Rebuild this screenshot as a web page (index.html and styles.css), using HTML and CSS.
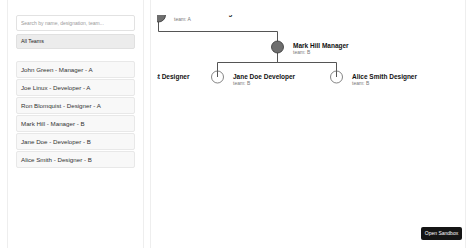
FILE: index.html
```html
<!DOCTYPE html>
<html>

<head>
    <meta charset="utf-8" />
    <title>org chart</title>
    <link rel="stylesheet" href="styles.css">
</head>

<body>
    <div class="app">
        <div class="side-panel">
            <input class="search" type="text" placeholder="Search by name, designation, team...">
            <div class="team-select">All Teams</div>
            <ul class="people-list">
                <li>John Green - Manager - A</li>
                <li>Joe Linux - Developer - A</li>
                <li>Ron Blomquist - Designer - A</li>
                <li>Mark Hill - Manager - B</li>
                <li>Jane Doe - Developer - B</li>
                <li>Alice Smith - Designer - B</li>
            </ul>
        </div>
        <div class="chart-panel">
            <div class="chart">
                <svg width="302" height="200">
                    <!-- links -->
                    <path class="link" d="M1.5,0 V16.5 H120.5 V32" />
                    <path class="link" d="M120.5,32 V47.5 H60.5 V62" />
                    <path class="link" d="M120.5,32 V47.5 H179.5 V62" />
                    <!-- nodes -->
                    <circle class="node parent" cx="1.5" cy="0" r="7" />
                    <text class="name" x="17" y="0">John Green Manager</text>
                    <text class="team" x="17" y="6">team: A</text>

                    <circle class="node parent" cx="120.5" cy="32" r="6" />
                    <text class="name" x="136" y="32.5">Mark Hill Manager</text>
                    <text class="team" x="136" y="38.5">team: B</text>

                    <text class="name" x="32.5" y="63.5" text-anchor="end">Ron Blomquist Designer</text>

                    <circle class="node" cx="60.5" cy="62" r="6" />
                    <text class="name" x="76" y="63.5">Jane Doe Developer</text>
                    <text class="team" x="76" y="69.5">team: B</text>

                    <circle class="node" cx="179.5" cy="62" r="6" />
                    <text class="name" x="195" y="63.5">Alice Smith Designer</text>
                    <text class="team" x="195" y="69.5">team: B</text>
                </svg>
            </div>
        </div>
    </div>
    <a class="sandbox-btn" href="#">Open Sandbox</a>
</body>

</html>
```

FILE: styles.css
```css
body {
    margin: 0;
    font-family: "Liberation Sans", Arial, sans-serif;
    color: #333;
    background: #fff;
}

.app {
    display: flex;
    gap: 6px;
    height: 100vh;
    padding: 0 7px;
}

.side-panel {
    width: 137px;
    box-sizing: border-box;
    padding: 15px 8px;
    border-left: 1px solid #eee;
    border-right: 1px solid #eee;
}

.search {
    display: block;
    width: 100%;
    height: 16px;
    box-sizing: border-box;
    margin: 0;
    padding: 0 4px;
    border: 1px solid #e2e2e2;
    border-radius: 2px;
    font-family: inherit;
    font-size: 5px;
    color: #333;
    outline: none;
}

.search::placeholder {
    color: #9a9a9a;
}

.team-select {
    height: 15px;
    box-sizing: border-box;
    margin-top: 3px;
    padding-left: 4px;
    border: 1px solid #e0e0e0;
    border-radius: 2px;
    background-color: #ececec;
    font-size: 5.3px;
    line-height: 13px;
    color: #222;
}

.people-list {
    margin: 12px 0 0;
    padding: 0;
    list-style: none;
}

.people-list li {
    height: 17px;
    box-sizing: border-box;
    margin-bottom: 1px;
    padding-left: 4px;
    border: 1px solid #e8e8e8;
    border-radius: 2px;
    background-color: #f8f8f8;
    font-size: 6.2px;
    line-height: 15px;
    color: #333;
}

.chart-panel {
    width: 316px;
    box-sizing: border-box;
    padding: 15px 6px 0;
    border-left: 1px solid #eee;
    border-right: 1px solid #eee;
}

.chart {
    overflow: hidden;
}

.chart svg {
    display: block;
}

.link {
    fill: none;
    stroke: #555;
    stroke-width: 1;
}

.node {
    fill: none;
    stroke: #666;
    stroke-width: 0.8;
}

.node.parent {
    fill: #6e6e6e;
    stroke: #333;
}

.name {
    font-size: 6.5px;
    font-weight: bold;
    fill: #111;
}

.team {
    font-size: 5px;
    fill: #777;
}

.sandbox-btn {
    position: fixed;
    right: 12px;
    bottom: 8px;
    width: 41px;
    height: 13px;
    border-radius: 2px;
    background-color: #151515;
    color: #fff;
    font-size: 5px;
    line-height: 13px;
    text-align: center;
    text-decoration: none;
}
```
